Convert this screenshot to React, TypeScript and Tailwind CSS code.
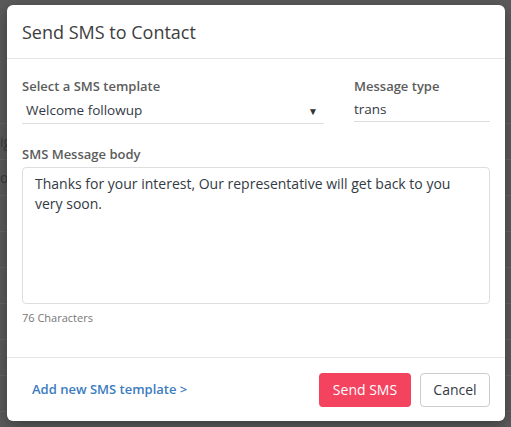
import React from 'react';

const ROWS = Array.from({ length: 12 });

export default function App() {
  return (
    <div
      className="relative w-[511px] h-[427px] overflow-hidden bg-[#5b5b5b]"
      style={{ fontFamily: '"Open Sans", "Noto Sans", sans-serif' }}
    >
      {/* Dimmed page behind the modal */}
      <div className="flex flex-col pt-[88px] text-[#3a3a3a] text-[14px]">
        {ROWS.map((_, i) => (
          <div key={i} className="h-[36px] border-b border-[#666] flex items-center">
            <span>{i === 1 ? 'ig' : i === 2 ? 'o' : ''}</span>
          </div>
        ))}
      </div>

      {/* Modal */}
      <div className="absolute left-[7px] top-[5px] w-[498px] bg-white rounded-[6px] shadow-[0_4px_16px_rgba(0,0,0,0.35)] flex flex-col">
        {/* Header */}
        <div className="h-[54px] flex items-center px-[15px] border-b border-[#e5e5e5]">
          <h2 className="text-[18px] text-[#3d3d3d] leading-none">Send SMS to Contact</h2>
        </div>

        {/* Body */}
        <div className="px-[15px] pt-[18px] pb-[32px] flex flex-col">
          <div className="flex gap-[30px]">
            <div className="w-[302px] flex flex-col">
              <label className="text-[13px] font-semibold text-[#5c5c5c] leading-[18px]">Select a SMS template</label>
              <div className="mt-[3px] h-[26px] border-b border-[#dedede] flex items-center justify-between pl-[4px] pr-[6px]">
                <span className="text-[13.5px] text-[#333a44]">Welcome followup</span>
                <span className="text-[10px] text-[#333] leading-none">▼</span>
              </div>
            </div>
            <div className="w-[136px] flex flex-col">
              <label className="text-[13px] font-semibold text-[#5c5c5c] leading-[18px]">Message type</label>
              <div className="mt-[3px] h-[24px] border-b border-[#dedede] flex items-center">
                <span className="text-[13.5px] text-[#333a44]">trans</span>
              </div>
            </div>
          </div>

          <label className="mt-[21px] text-[13px] font-semibold text-[#5c5c5c] leading-[18px]">SMS Message body</label>
          <div className="mt-[4px] h-[137px] border border-[#dddddd] rounded-[4px] px-[12px] pt-[6px] text-[14px] leading-[20px] text-[#333a44]">
            Thanks for your interest, Our representative will get back to you very soon.
          </div>
          <div className="mt-[7px] text-[11px] text-[#777] leading-[14px]">76 Characters</div>
        </div>

        {/* Footer */}
        <div className="border-t border-[#e5e5e5] h-[64px] flex items-center justify-between pl-[25px] pr-[15px]">
          <a className="text-[13px] font-semibold text-[#3b7cc0] cursor-pointer">Add new SMS template &gt;</a>
          <div className="flex gap-[9px]">
            <button className="h-[34px] w-[92px] rounded-[4px] bg-[#f4435f] text-white text-[14px]">Send SMS</button>
            <button className="h-[34px] w-[70px] rounded-[4px] border border-[#cccccc] bg-white text-[#333a44] text-[14px]">Cancel</button>
          </div>
        </div>
      </div>
    </div>
  );
}
